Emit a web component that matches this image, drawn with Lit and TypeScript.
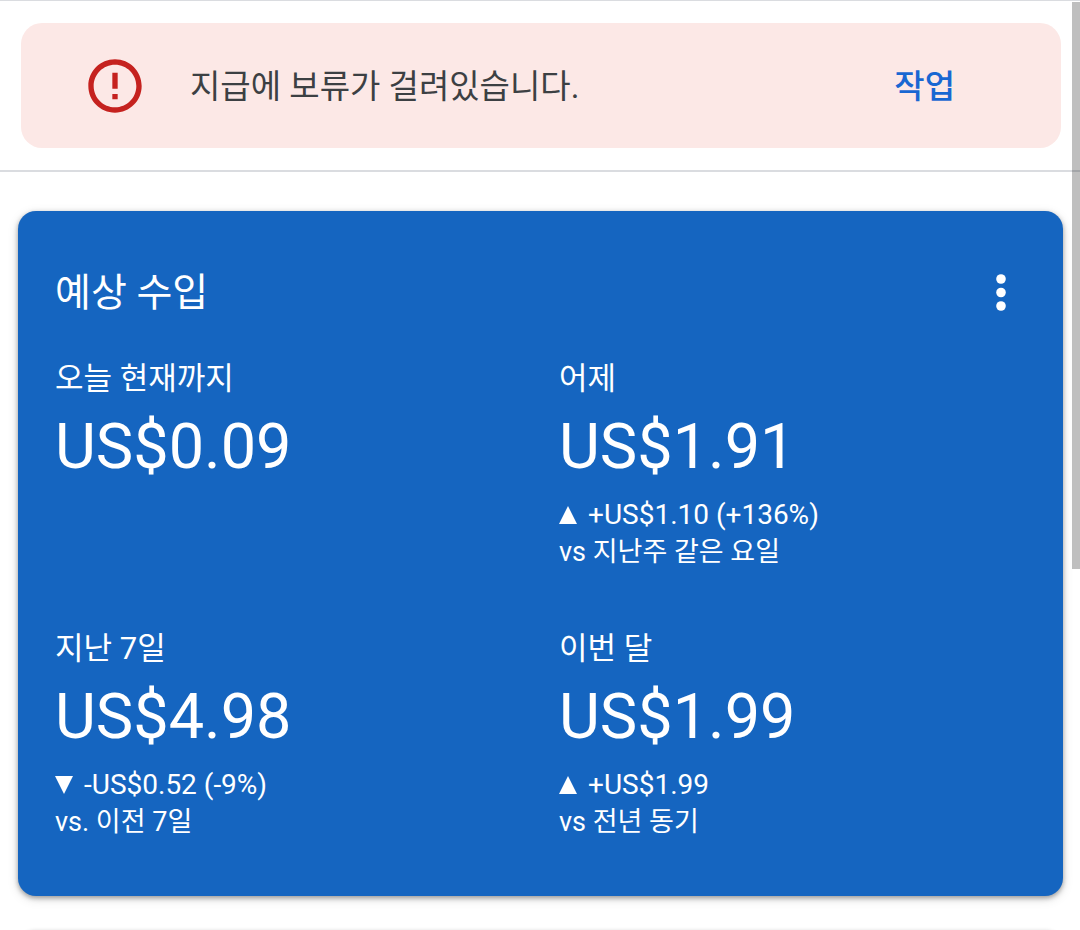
import { LitElement, html, css, svg, nothing } from "lit";
import { customElement, property } from "lit/decorators.js";

interface Metric {
  label: string;
  value: string;
  trend?: "up" | "down";
  change?: string;
  versus?: string;
}

const METRICS: Metric[] = [
  { label: "오늘 현재까지", value: "US$0.09" },
  {
    label: "어제",
    value: "US$1.91",
    trend: "up",
    change: "+US$1.10 (+136%)",
    versus: "vs 지난주 같은 요일",
  },
  {
    label: "지난 7일",
    value: "US$4.98",
    trend: "down",
    change: "-US$0.52 (-9%)",
    versus: "vs. 이전 7일",
  },
  {
    label: "이번 달",
    value: "US$1.99",
    trend: "up",
    change: "+US$1.99",
    versus: "vs 전년 동기",
  },
];

@customElement("notice-bar")
export class NoticeBar extends LitElement {
  static styles = css`
    :host {
      display: block;
      padding: 22px 19px 22px 21px;
      border-top: 1px solid #dadce0;
      border-bottom: 2px solid #dadce0;
    }
    .notice {
      display: flex;
      align-items: center;
      gap: 43px;
      min-height: 125px;
      box-sizing: border-box;
      padding: 0 106px 0 62px;
      border-radius: 21px;
      background: #fce8e6;
    }
    .icon {
      flex: none;
      width: 64px;
      height: 64px;
      fill: #c5221f;
    }
    .message,
    .action {
      padding-top: 3px;
      font-size: 33px;
      line-height: 48px;
    }
    .message {
      flex: 1;
      margin: 0;
      color: #3c4043;
    }
    .action {
      font-weight: 500;
      color: #1967d2;
      text-decoration: none;
    }
  `;

  render() {
    return html`
      <div class="notice" role="alert">
        <svg class="icon" viewBox="0 0 24 24" aria-hidden="true">
          <path
            d="M11 15h2v2h-2zm0-8h2v6h-2zm.99-5C6.47 2 2 6.48 2 12s4.47 10 9.99 10C17.52 22 22 17.52 22 12S17.52 2 11.99 2zM12 20c-4.42 0-8-3.58-8-8s3.58-8 8-8 8 3.58 8 8-3.58 8-8 8z"
          />
        </svg>
        <p class="message">지급에 보류가 걸려있습니다.</p>
        <a class="action" href="#payments">작업</a>
      </div>
    `;
  }
}

@customElement("metric-cell")
export class MetricCell extends LitElement {
  @property({ attribute: false }) metric!: Metric;

  static styles = css`
    :host {
      display: block;
    }
    .label,
    .value,
    .change,
    .versus {
      margin: 0;
      font-weight: 400;
    }
    .label {
      font-size: 31px;
      line-height: 44px;
    }
    .value {
      margin-top: 8px;
      font-size: 63px;
      line-height: 76px;
    }
    .change {
      display: flex;
      align-items: center;
      gap: 11px;
      margin-top: 12px;
      font-size: 28px;
      line-height: 36px;
    }
    .arrow {
      flex: none;
      width: 18px;
      height: 18px;
      fill: currentColor;
    }
    .versus {
      font-size: 27px;
      line-height: 38px;
    }
  `;

  render() {
    const { label, value, trend, change, versus } = this.metric;
    const points = trend === "up" ? "9,0 18,18 0,18" : "0,0 18,0 9,18";
    return html`
      <h3 class="label">${label}</h3>
      <p class="value">${value}</p>
      ${change
        ? html`<p class="change">
              <svg class="arrow" viewBox="0 0 18 18" aria-hidden="true">
                ${svg`<polygon points=${points}></polygon>`}
              </svg>
              <span>${change}</span>
            </p>
            <p class="versus">${versus}</p>`
        : nothing}
    `;
  }
}

@customElement("earnings-card")
export class EarningsCard extends LitElement {
  static styles = css`
    :host {
      display: block;
      padding: 0 0 55px 37px;
      border-radius: 18px;
      background: #1565c0;
      color: #fff;
      box-shadow: 0 2px 5px rgba(0, 0, 0, 0.35), 0 3px 12px rgba(0, 0, 0, 0.12);
    }
    .head {
      display: flex;
      align-items: center;
      justify-content: space-between;
      padding: 52px 31px 34px 0;
    }
    .title {
      margin: 0;
      font-size: 39px;
      line-height: 60px;
      font-weight: 400;
    }
    .menu {
      display: flex;
      align-items: center;
      justify-content: center;
      width: 62px;
      height: 60px;
      padding: 0;
      border: 0;
      background: none;
      color: inherit;
    }
    .dots {
      width: 10px;
      height: 38px;
      fill: currentColor;
    }
    .grid {
      display: grid;
      grid-template-columns: repeat(2, minmax(0, 1fr));
      row-gap: 56px;
    }
  `;

  render() {
    return html`
      <div class="head">
        <h2 class="title">예상 수입</h2>
        <button class="menu" type="button" aria-label="메뉴">
          <svg class="dots" viewBox="0 0 10 38" aria-hidden="true">
            <circle cx="5" cy="5" r="4.8" />
            <circle cx="5" cy="18.5" r="4.8" />
            <circle cx="5" cy="32" r="4.8" />
          </svg>
        </button>
      </div>
      <div class="grid">
        ${METRICS.map((m) => html`<metric-cell .metric=${m}></metric-cell>`)}
      </div>
    `;
  }
}

@customElement("app-root")
export class AppRoot extends LitElement {
  static styles = css`
    :host {
      display: block;
      position: relative;
      height: 100vh;
      overflow: hidden;
      background: #fff;
      font-family: Roboto, "Noto Sans CJK KR", sans-serif;
    }
    .cards {
      display: grid;
      gap: 34px;
      padding: 39px 17px 0 18px;
    }
    .next {
      height: 200px;
      border-radius: 18px;
      background: #fff;
      box-shadow: 0 1px 4px rgba(0, 0, 0, 0.2);
    }
    .scrollbar {
      position: absolute;
      top: 2px;
      right: 0;
      width: 8px;
      height: 61%;
      background: rgba(0, 0, 0, 0.25);
    }
  `;

  render() {
    return html`
      <notice-bar></notice-bar>
      <main class="cards">
        <earnings-card></earnings-card>
        <section class="next"></section>
      </main>
      <div class="scrollbar"></div>
    `;
  }
}
